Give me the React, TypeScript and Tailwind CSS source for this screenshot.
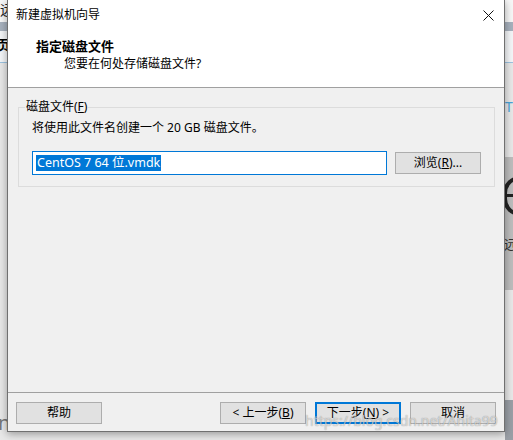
const font = "font-['Segoe_UI','Noto_Sans','Noto_Sans_CJK_SC',sans-serif]";

function Btn({ children, primary = false }: { children: React.ReactNode; primary?: boolean }) {
  return (
    <button
      className={
        primary
          ? 'w-[86px] h-[22px] bg-[#e1e1e1] border-2 border-[#0078d7] text-[12px] text-black leading-none flex items-center justify-center'
          : 'w-[86px] h-[22px] bg-[#e1e1e1] border border-[#adadad] text-[12px] text-black leading-none flex items-center justify-center'
      }
    >
      {children}
    </button>
  );
}

export default function App() {
  return (
    <div className={`relative w-[513px] h-[440px] overflow-hidden bg-[#e8e8e8] ${font}`}>
      {/* desktop behind the dialog */}
      <div className="absolute left-0 top-0 w-full h-[22px] bg-[#f7f7f7]" />
      <div className="absolute left-0 top-[22px] w-full h-[9px] bg-[#a7b1bd]" />
      <div className="absolute left-0 top-[31px] w-full h-[31px] bg-[#f4f6f8]" />
      <div className="absolute left-0 top-[62px] w-full h-px bg-[#9cc3e0]" />
      <div className="absolute left-0 top-[3px] text-[14px] leading-none text-[#222]">远</div>
      <div className="absolute left-[-4px] top-[38px] text-[14px] font-bold leading-none text-black">页</div>
      <div className="absolute right-0 top-[100px] w-[8px] text-[14px] leading-none text-[#4aa3d8]">T</div>
      <div className="absolute right-0 top-[157px] w-[8px] h-[133px] bg-[#bdbdbd]" />
      <div className="absolute left-[503px] top-[176px] w-[34px] h-[40px] rounded-full border-[4px] border-[#222]" />
      <div className="absolute left-[504px] top-[194px] w-[10px] h-[3px] bg-[#222]" />
      <div className="absolute left-[504px] top-[238px] text-[13px] leading-none text-[#333]">远</div>
      <div className="absolute left-[-2px] top-[413px] text-[20px] leading-none text-[#777]">n</div>
      <div className="absolute right-0 top-[400px] w-[8px] h-[40px] bg-[#9a9fa6]" />

      {/* dialog */}
      <div className="relative ml-[7px] w-[498px] h-[432px] flex flex-col bg-[#f0f0f0] border border-t-0 border-[#707070] shadow-[0_2px_8px_rgba(0,0,0,0.35)]">
        <div className="h-[30px] bg-white flex items-center justify-between pl-[8px] pr-[9px]">
          <span className="text-[12px] text-black">新建虚拟机向导</span>
          <svg width="11" height="11" viewBox="0 0 11 11" className="mr-[1px]">
            <path d="M0.5 0.5L10.5 10.5M10.5 0.5L0.5 10.5" stroke="#111" strokeWidth="1" />
          </svg>
        </div>
        <div className="h-[58px] bg-white border-b border-[#a0a0a0] pt-[8px]">
          <div className="pl-[28px] text-[13px] leading-[16px] font-bold text-black">指定磁盘文件</div>
          <div className="pl-[56px] mt-[2px] text-[12px] leading-[16px] text-black">您要在何处存储磁盘文件?</div>
        </div>

        <div className="flex-1 pt-[11px] pl-[10px] pr-[9px]">
          <fieldset className="border border-[#dcdcdc] px-[7px] pb-[11px]">
            <legend className="text-[12px] leading-[16px] text-black px-px -ml-px">
              磁盘文件(<span className="underline">F</span>)
            </legend>
            <div className="pl-[6px] pt-[5px]">
              <div className="text-[12px] leading-[16px] text-black">将使用此文件名创建一个 20 GB 磁盘文件。</div>
              <div className="mt-[15px] flex items-center gap-[8px]">
                <div className="w-[355px] h-[24px] bg-white border border-[#0078d7] flex items-center pl-[3px]">
                  <span className="bg-[#0078d7] text-white text-[12.5px] leading-[16px] pl-px pr-px">CentOS 7 64 位.vmdk</span>
                </div>
                <Btn>
                  浏览(<span className="underline">R</span>)...
                </Btn>
              </div>
            </div>
          </fieldset>
        </div>

        <div className="h-[39px] border-t border-[#a0a0a0] pt-[9px] px-[8px] flex items-start">
          <Btn>帮助</Btn>
          <div className="ml-auto flex gap-[9px]">
            <Btn>
              &lt; 上一步(<span className="underline">B</span>)
            </Btn>
            <Btn primary>
              下一步(<span className="underline">N</span>) &gt;
            </Btn>
            <Btn>取消</Btn>
          </div>
        </div>
      </div>

      {/* watermark */}
      <div className="absolute left-[305px] top-[414px] text-[14px] leading-none text-white/60 [text-shadow:0_0_1px_rgba(0,0,0,0.45)]">
        https://blog.csdn.net/Anita99
      </div>
    </div>
  );
}
